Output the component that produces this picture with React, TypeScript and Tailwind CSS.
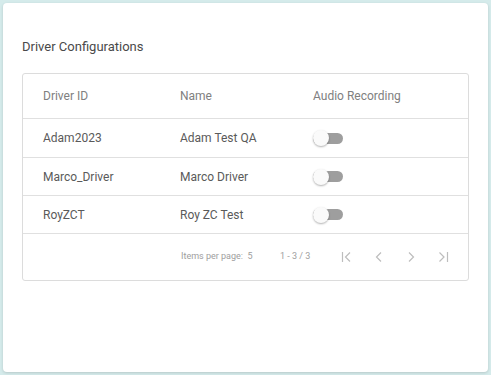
import React from "react";

type Driver = { id: string; name: string; audio: boolean; h: string };

const drivers: Driver[] = [
  { id: "Adam2023", name: "Adam Test QA", audio: false, h: "h-[39px]" },
  { id: "Marco_Driver", name: "Marco Driver", audio: false, h: "h-[38px]" },
  { id: "RoyZCT", name: "Roy ZC Test", audio: false, h: "h-[38px]" },
];

function Toggle() {
  return (
    <div className="relative w-[30px] h-[16px] flex items-center">
      <div className="w-[30px] h-[11px] rounded-full bg-[#9e9e9e]" />
      <div className="absolute left-0 top-0 w-[16px] h-[16px] rounded-full bg-[#fafafa] shadow-[0_1px_2px_rgba(0,0,0,0.3)]" />
    </div>
  );
}

function PageIcon({ d }: { d: string }) {
  return (
    <svg width="14" height="14" viewBox="0 0 14 14" fill="none" stroke="#bdbdbd" strokeWidth="1.2">
      <path d={d} />
    </svg>
  );
}

export default function App() {
  return (
    <div
      className="w-[491px] h-[375px] bg-[#d5ebeb] p-[3px]"
      style={{ fontFamily: "Roboto, 'Noto Sans', sans-serif" }}
    >
      <div className="h-[369px] w-[485px] bg-white rounded-[4px] shadow-[0_1px_3px_rgba(0,0,0,0.15)] px-[19px] pt-[35px]">
        <h2 className="text-[13px] text-[#4a4a4a] leading-[18px]">Driver Configurations</h2>
        <div className="mt-[17px] border border-[#dcdcdc] rounded-[3px]">
          <div className="flex items-center h-[45px] pl-[20px] text-[12px] text-[#808080] border-b border-[#e0e0e0]">
            <div className="w-[137px]">Driver ID</div>
            <div className="w-[133px]">Name</div>
            <div>Audio Recording</div>
          </div>
          {drivers.map((d) => (
            <div
              key={d.id}
              className={`flex items-center ${d.h} pl-[20px] text-[12px] text-[#5a5a5a] border-b border-[#e0e0e0]`}
            >
              <div className="w-[137px]">{d.id}</div>
              <div className="w-[133px]">{d.name}</div>
              <Toggle />
            </div>
          ))}
          <div className="flex items-center h-[46px] pl-[158px] text-[9px] text-[#9e9e9e]">
            <div className="w-[99px]">Items per page:&nbsp; 5</div>
            <div className="w-[60px]">1 - 3 / 3</div>
            <div className="flex items-center gap-[18px]">
              <PageIcon d="M2.5 2v10M10 2.5L5.5 7l4.5 4.5" />
              <PageIcon d="M9 2.5L4.5 7L9 11.5" />
              <PageIcon d="M5 2.5L9.5 7L5 11.5" />
              <PageIcon d="M3.5 2.5L8 7l-4.5 4.5M11.5 2v10" />
            </div>
          </div>
        </div>
      </div>
    </div>
  );
}
